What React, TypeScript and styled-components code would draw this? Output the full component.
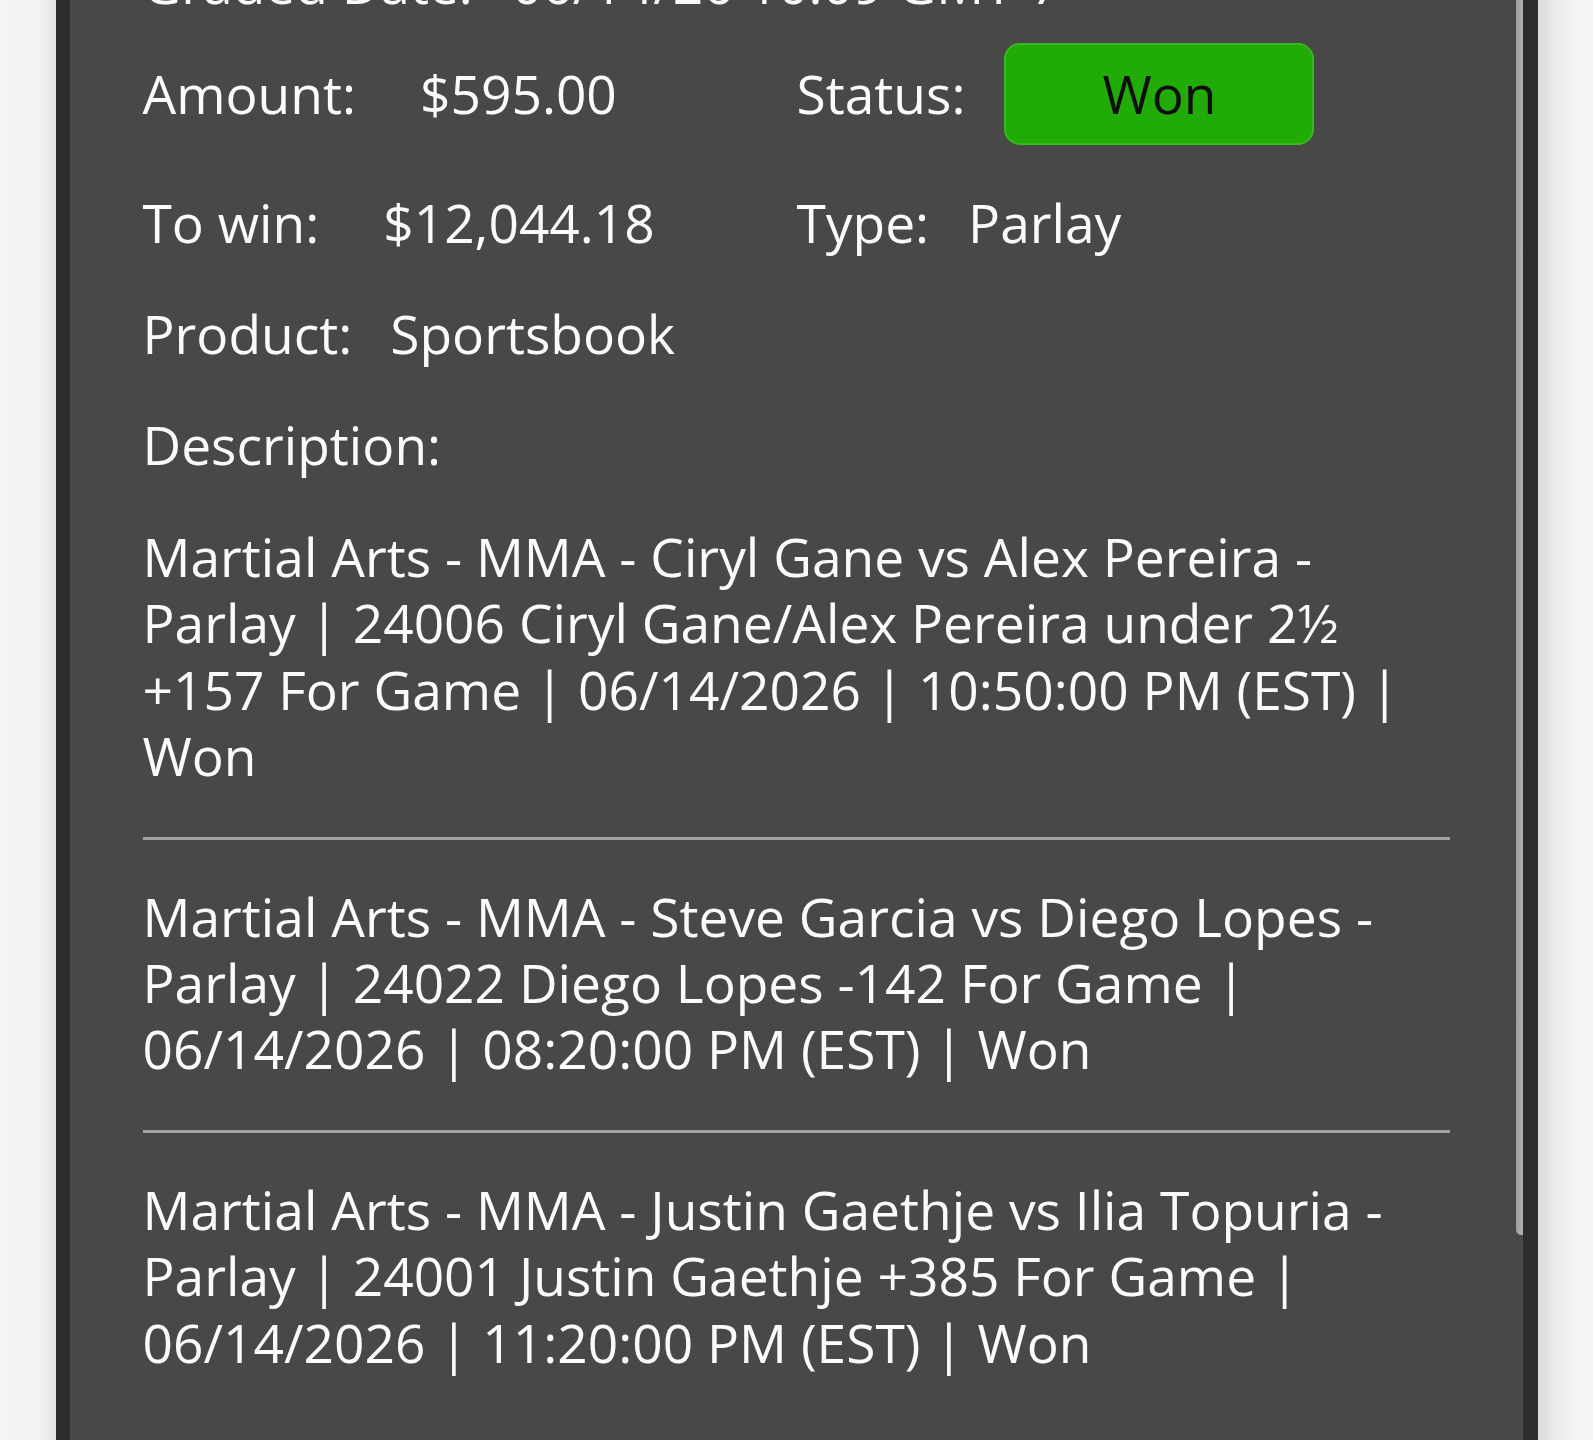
import React from "react";
import styled, { createGlobalStyle } from "styled-components";

const GlobalStyle = createGlobalStyle`
  html, body {
    margin: 0;
    padding: 0;
    background: #f4f4f4;
  }
  body {
    font-family: "Open Sans", "Liberation Sans", sans-serif;
  }
`;

const legs = [
  "Martial Arts - MMA - Ciryl Gane vs Alex Pereira - Parlay | 24006 Ciryl Gane/Alex Pereira under 2½ +157 For Game | 06/14/2026 | 10:50:00 PM (EST) | Won",
  "Martial Arts - MMA - Steve Garcia vs Diego Lopes - Parlay | 24022 Diego Lopes -142 For Game | 06/14/2026 | 08:20:00 PM (EST) | Won",
  "Martial Arts - MMA - Justin Gaethje vs Ilia Topuria - Parlay | 24001 Justin Gaethje +385 For Game | 06/14/2026 | 11:20:00 PM (EST) | Won",
];

const App = () => {
  return (
    <>
      <GlobalStyle />
      <Page>
        <Gutter side="left" />
        <Panel>
          <Content>
            <Field gap={39}>
              <Label>Graded Date:</Label>
              <Value>06/14/26 10:09 GMT-7</Value>
            </Field>

            <FieldGrid>
              <Field gap={64}>
                <Label>Amount:</Label>
                <Value>$595.00</Value>
              </Field>
              <Field gap={39}>
                <Label>Status:</Label>
                <StatusBadge>Won</StatusBadge>
              </Field>
            </FieldGrid>

            <FieldGrid>
              <Field gap={64}>
                <Label>To win:</Label>
                <Value>$12,044.18</Value>
              </Field>
              <Field gap={39}>
                <Label>Type:</Label>
                <Value>Parlay</Value>
              </Field>
            </FieldGrid>

            <Field gap={38}>
              <Label>Product:</Label>
              <Value>Sportsbook</Value>
            </Field>

            <Label>Description:</Label>

            {legs.map((leg, i) => (
              <React.Fragment key={i}>
                {i > 0 && <Divider />}
                <Leg>{leg}</Leg>
              </React.Fragment>
            ))}
          </Content>
          <ScrollThumb />
        </Panel>
        <Gutter side="right" />
      </Page>
    </>
  );
};

const Page = styled.div`
  display: flex;
  height: 1440px;
  overflow: hidden;
  background: #f4f4f4;
`;

const Gutter = styled.div<{ side: "left" | "right" }>`
  flex: 1;
  background: ${(p) =>
    p.side === "left"
      ? "linear-gradient(to right, #f4f4f4 0px, #f2f2f2 38px, #e4e4e4 56px)"
      : "linear-gradient(to right, #d9d9d9 0px, #ececec 18px, #f4f4f4 40px)"};
`;

const Panel = styled.div`
  position: relative;
  width: 1482px;
  flex: none;
  box-sizing: border-box;
  border-left: 14px solid #2d2d2b;
  border-right: 15px solid #2d2d2b;
  background: #484846;
  overflow: hidden;
`;

const Content = styled.div`
  display: flex;
  flex-direction: column;
  gap: 45px;
  margin-top: -49px;
  padding: 0 73px;
  color: #fafafa;
  font-size: 53.3px;
  line-height: 66px;
`;

const FieldGrid = styled.div`
  display: grid;
  grid-template-columns: 654px auto;
  align-items: center;
  &:nth-child(2) {
    margin-top: -19px;
  }
`;

const Field = styled.div<{ gap: number }>`
  display: flex;
  align-items: center;
  gap: ${(p) => p.gap}px;
  white-space: nowrap;
`;

const Label = styled.span`
  font-weight: 400;
`;

const Value = styled.span`
  font-weight: 400;
`;

const StatusBadge = styled.div`
  width: 310px;
  height: 102px;
  box-sizing: border-box;
  display: flex;
  align-items: center;
  justify-content: center;
  background: #21ab07;
  border: 2px solid #37b81f;
  border-radius: 16px;
  color: #0e0e0e;
`;

const Leg = styled.p`
  margin: 0;
  line-height: 66.4px;
  &:first-of-type {
    margin-top: 1px;
  }
`;

const Divider = styled.hr`
  margin: 2px 0 -1px;
  border: none;
  height: 3px;
  background: #a3a3a3;
`;

const ScrollThumb = styled.div`
  position: absolute;
  top: -12px;
  right: -4px;
  width: 11px;
  height: 1247px;
  border-radius: 6px;
  background: linear-gradient(to right, #9c9c9c, #b0b0b0 50%, #9c9c9c);
`;

export default App;
